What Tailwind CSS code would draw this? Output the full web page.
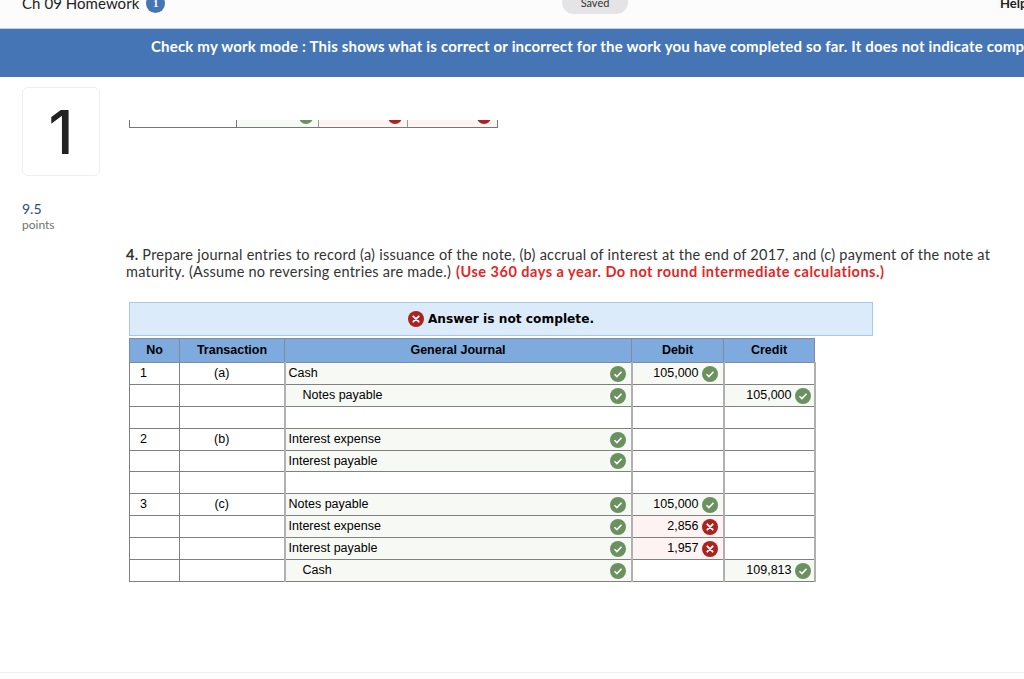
<!DOCTYPE html>
<html lang="en">

<head>
    <meta charset="UTF-8">
    <title>Ch 09 Homework</title>
    <script src="https://cdn.jsdelivr.net/npm/@tailwindcss/browser@4"></script>
</head>

<body class="flex h-[679px] w-[1024px] flex-col overflow-hidden bg-white font-['Lato',sans-serif] text-[#222]">
    <!-- top bar, scrolled partly out of view -->
    <header class="flex h-[29px] shrink-0 items-start overflow-hidden border-b border-[#c5d0de] bg-[#fcfcfc] pl-[22px]">
        <div class="-mt-[7px] flex w-[540px] items-center gap-[7px]">
            <span class="text-[15px] leading-[20px] tracking-[0.05px]">Ch 09 Homework</span>
            <span class="flex h-[19px] w-[19px] items-center justify-center rounded-full bg-[#4675b6] font-['Liberation_Serif',serif] text-[11px] font-bold text-white">1</span>
        </div>
        <div class="-mt-[10px] flex h-[24px] w-[66px] items-center justify-center rounded-full bg-[#e4e3e5] pt-[3px] text-[11px] text-[#333]">Saved</div>
        <div class="-mt-[6px] ml-auto w-[24px] overflow-hidden text-[13px] leading-[18px] font-bold">Help</div>
    </header>

    <div class="flex h-[48px] shrink-0 items-center overflow-hidden bg-[#4675b6] pb-[13px] pl-[151px]">
        <p class="text-[15px] font-bold tracking-[0.18px] whitespace-nowrap text-white">Check my work mode : This shows what is correct or incorrect for the work you have completed so far. It does not indicate completion.</p>
    </div>

    <main class="flex h-[596px] shrink-0 border-b border-[#f0f0f0]">
        <!-- question number column -->
        <aside class="w-[126px] shrink-0 pt-[10px] pl-[22px]">
            <div class="flex h-[89px] w-[78px] items-center justify-center rounded-[6px] border border-[#efefef] font-['Inter',sans-serif] text-[60px] leading-none font-medium text-[#222]">1</div>
            <div class="mt-[24px] text-[14px] leading-[18px] text-[#1f4a8a]">9.5</div>
            <div class="text-[12px] leading-[14px] text-[#707070]">points</div>
        </aside>

        <section class="w-[890px] pt-[43px]">
            <!-- bottom edge of the previous table, cut off by the scroll area -->
            <div class="ml-[3px] flex h-[8px] w-[369px] items-start border-x border-b border-[#777]">
                <div class="h-full w-[107px] border-r border-[#777]"></div>
                <div class="h-full w-[82px] overflow-hidden border-r border-[#999] bg-[#f7f9f5] pr-[5px]">
                    <div class="-mt-[10px] ml-auto h-[14px] w-[14px] rounded-full bg-[#6c9160]"></div>
                </div>
                <div class="h-full w-[89px] overflow-hidden border-r border-[#999] bg-[#fdf3f3] pr-[5px]">
                    <div class="-mt-[10px] ml-auto h-[14px] w-[14px] rounded-full bg-[#a9231f]"></div>
                </div>
                <div class="h-full flex-1 overflow-hidden bg-[#fdf3f3] pr-[6px]">
                    <div class="-mt-[10px] ml-auto h-[14px] w-[14px] rounded-full bg-[#a9231f]"></div>
                </div>
            </div>

            <p class="mt-[118px] w-[880px] text-[14.5px] leading-[17px] tracking-[0.25px] text-[#333]">
                <b>4.</b> Prepare journal entries to record (a) issuance of the note, (b) accrual of interest at the end of 2017, and (c) payment of the note at maturity. (Assume no reversing entries are made.) <b class="ml-[1px] tracking-[0.5px] text-[#e5261f]">(Use 360 days a year. Do not round intermediate calculations.)</b>
            </p>

            <div class="mt-[22px] ml-[3px] flex h-[34px] w-[744px] items-center justify-center gap-[4px] border border-[#a9c8e8] bg-[#dcebf9] font-['DejaVu_Sans',sans-serif] text-[12.2px] font-bold text-black">
                <svg class="h-[16px] w-[16px]" viewBox="0 0 16 16"><circle cx="8" cy="8" r="8" fill="#a9231f"/><path d="M5.3 5.3l5.4 5.4M10.7 5.3l-5.4 5.4" stroke="#fff" stroke-width="1.8" stroke-linecap="round"/></svg>
                Answer is not complete.
            </div>

            <table class="mt-[2px] ml-[3px] w-[685px] table-fixed border-collapse font-['Liberation_Sans',sans-serif] text-[12.5px] text-black [&_td]:border [&_td]:border-[#808080] [&_td:nth-child(n+3)]:border-x-2 [&_td:nth-child(n+3)]:border-x-[#b0b0b0] [&_th]:border [&_th]:border-[#7f8b99]">
                <colgroup><col class="w-[50px]"><col class="w-[105px]"><col class="w-[347px]"><col class="w-[92px]"><col class="w-[91px]"></colgroup>
                <thead>
                    <tr class="h-[24px] bg-[#7eaade] font-bold">
                        <th>No</th>
                        <th>Transaction</th>
                        <th>General Journal</th>
                        <th>Debit</th>
                        <th>Credit</th>
                    </tr>
                </thead>
                <tbody>
                    <tr class="h-[22px]">
                        <td class="pl-[10px]">1</td>
                        <td class="pr-[20px] text-center">(a)</td>
                        <td class="bg-[#f7f9f5] pl-[3px]"><div class="flex items-center justify-between pr-[5px]">Cash<svg class="h-[16px] w-[16px]" viewBox="0 0 16 16"><circle cx="8" cy="8" r="8" fill="#6c9160"/><path d="M4.5 8.3l2.4 2.3 4.6-4.8" fill="none" stroke="#fff" stroke-width="1.5"/></svg></div></td>
                        <td class="bg-[#f7f9f5]"><div class="flex items-center justify-end gap-[3px] pr-[5px]">105,000<svg class="h-[16px] w-[16px]" viewBox="0 0 16 16"><circle cx="8" cy="8" r="8" fill="#6c9160"/><path d="M4.5 8.3l2.4 2.3 4.6-4.8" fill="none" stroke="#fff" stroke-width="1.5"/></svg></div></td>
                        <td></td>
                    </tr>
                    <tr class="h-[22px]">
                        <td></td>
                        <td></td>
                        <td class="bg-[#f7f9f5] pl-[17px]"><div class="flex items-center justify-between pr-[5px]">Notes payable<svg class="h-[16px] w-[16px]" viewBox="0 0 16 16"><circle cx="8" cy="8" r="8" fill="#6c9160"/><path d="M4.5 8.3l2.4 2.3 4.6-4.8" fill="none" stroke="#fff" stroke-width="1.5"/></svg></div></td>
                        <td></td>
                        <td class="bg-[#f7f9f5]"><div class="flex items-center justify-end gap-[3px] pr-[3px]">105,000<svg class="h-[16px] w-[16px]" viewBox="0 0 16 16"><circle cx="8" cy="8" r="8" fill="#6c9160"/><path d="M4.5 8.3l2.4 2.3 4.6-4.8" fill="none" stroke="#fff" stroke-width="1.5"/></svg></div></td>
                    </tr>
                    <tr class="h-[22px]">
                        <td></td>
                        <td></td>
                        <td></td>
                        <td></td>
                        <td></td>
                    </tr>
                    <tr class="h-[22px]">
                        <td class="pl-[10px]">2</td>
                        <td class="pr-[20px] text-center">(b)</td>
                        <td class="bg-[#f7f9f5] pl-[3px]"><div class="flex items-center justify-between pr-[5px]">Interest expense<svg class="h-[16px] w-[16px]" viewBox="0 0 16 16"><circle cx="8" cy="8" r="8" fill="#6c9160"/><path d="M4.5 8.3l2.4 2.3 4.6-4.8" fill="none" stroke="#fff" stroke-width="1.5"/></svg></div></td>
                        <td></td>
                        <td></td>
                    </tr>
                    <tr class="h-[21px]">
                        <td></td>
                        <td></td>
                        <td class="bg-[#f7f9f5] pl-[3px]"><div class="flex items-center justify-between pr-[5px]">Interest payable<svg class="h-[16px] w-[16px]" viewBox="0 0 16 16"><circle cx="8" cy="8" r="8" fill="#6c9160"/><path d="M4.5 8.3l2.4 2.3 4.6-4.8" fill="none" stroke="#fff" stroke-width="1.5"/></svg></div></td>
                        <td></td>
                        <td></td>
                    </tr>
                    <tr class="h-[22px]">
                        <td></td>
                        <td></td>
                        <td></td>
                        <td></td>
                        <td></td>
                    </tr>
                    <tr class="h-[22px]">
                        <td class="pl-[10px]">3</td>
                        <td class="pr-[20px] text-center">(c)</td>
                        <td class="bg-[#f7f9f5] pl-[3px]"><div class="flex items-center justify-between pr-[5px]">Notes payable<svg class="h-[16px] w-[16px]" viewBox="0 0 16 16"><circle cx="8" cy="8" r="8" fill="#6c9160"/><path d="M4.5 8.3l2.4 2.3 4.6-4.8" fill="none" stroke="#fff" stroke-width="1.5"/></svg></div></td>
                        <td class="bg-[#f7f9f5]"><div class="flex items-center justify-end gap-[3px] pr-[5px]">105,000<svg class="h-[16px] w-[16px]" viewBox="0 0 16 16"><circle cx="8" cy="8" r="8" fill="#6c9160"/><path d="M4.5 8.3l2.4 2.3 4.6-4.8" fill="none" stroke="#fff" stroke-width="1.5"/></svg></div></td>
                        <td></td>
                    </tr>
                    <tr class="h-[22px]">
                        <td></td>
                        <td></td>
                        <td class="bg-[#f7f9f5] pl-[3px]"><div class="flex items-center justify-between pr-[5px]">Interest expense<svg class="h-[16px] w-[16px]" viewBox="0 0 16 16"><circle cx="8" cy="8" r="8" fill="#6c9160"/><path d="M4.5 8.3l2.4 2.3 4.6-4.8" fill="none" stroke="#fff" stroke-width="1.5"/></svg></div></td>
                        <td class="bg-[#fdf3f3]"><div class="flex items-center justify-end gap-[3px] pr-[5px]">2,856<svg class="h-[16px] w-[16px]" viewBox="0 0 16 16"><circle cx="8" cy="8" r="8" fill="#a9231f"/><path d="M5.3 5.3l5.4 5.4M10.7 5.3l-5.4 5.4" stroke="#fff" stroke-width="1.8" stroke-linecap="round"/></svg></div></td>
                        <td></td>
                    </tr>
                    <tr class="h-[22px]">
                        <td></td>
                        <td></td>
                        <td class="bg-[#f7f9f5] pl-[3px]"><div class="flex items-center justify-between pr-[5px]">Interest payable<svg class="h-[16px] w-[16px]" viewBox="0 0 16 16"><circle cx="8" cy="8" r="8" fill="#6c9160"/><path d="M4.5 8.3l2.4 2.3 4.6-4.8" fill="none" stroke="#fff" stroke-width="1.5"/></svg></div></td>
                        <td class="bg-[#fdf3f3]"><div class="flex items-center justify-end gap-[3px] pr-[5px]">1,957<svg class="h-[16px] w-[16px]" viewBox="0 0 16 16"><circle cx="8" cy="8" r="8" fill="#a9231f"/><path d="M5.3 5.3l5.4 5.4M10.7 5.3l-5.4 5.4" stroke="#fff" stroke-width="1.8" stroke-linecap="round"/></svg></div></td>
                        <td></td>
                    </tr>
                    <tr class="h-[22px]">
                        <td></td>
                        <td></td>
                        <td class="bg-[#f7f9f5] pl-[17px]"><div class="flex items-center justify-between pr-[5px]">Cash<svg class="h-[16px] w-[16px]" viewBox="0 0 16 16"><circle cx="8" cy="8" r="8" fill="#6c9160"/><path d="M4.5 8.3l2.4 2.3 4.6-4.8" fill="none" stroke="#fff" stroke-width="1.5"/></svg></div></td>
                        <td></td>
                        <td class="bg-[#f7f9f5]"><div class="flex items-center justify-end gap-[3px] pr-[3px]">109,813<svg class="h-[16px] w-[16px]" viewBox="0 0 16 16"><circle cx="8" cy="8" r="8" fill="#6c9160"/><path d="M4.5 8.3l2.4 2.3 4.6-4.8" fill="none" stroke="#fff" stroke-width="1.5"/></svg></div></td>
                    </tr>
                </tbody>
            </table>
        </section>
    </main>
    <div class="flex-1 bg-[#fdfdfd]"></div>
</body>

</html>
